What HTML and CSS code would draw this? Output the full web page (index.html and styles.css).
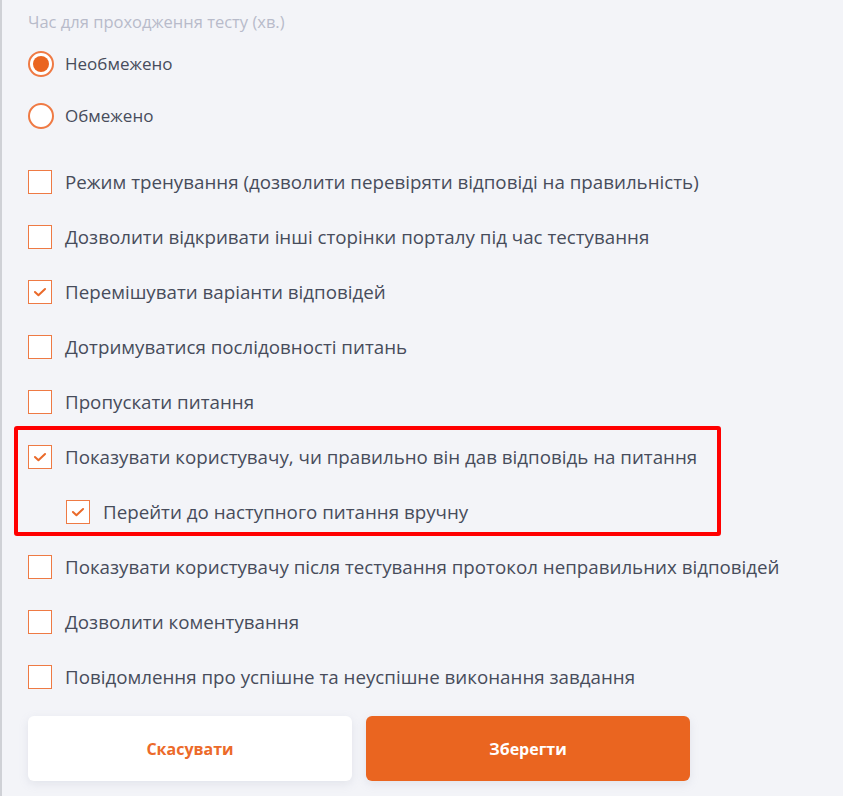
FILE: index.html
```html
<!DOCTYPE html>
<html lang="uk">
<head>
<meta charset="utf-8">
<title>Налаштування тесту</title>
<link rel="stylesheet" href="styles.css">
</head>
<body>
<div class="page">
  <div class="field-label">Час для проходження тесту (хв.)</div>
  <div class="radio-row"><span class="radio checked"></span><span class="text">Необмежено</span></div>
  <div class="radio-row"><span class="radio"></span><span class="text">Обмежено</span></div>

  <div class="checks">
    <div class="row"><span class="box"></span><span class="text">Режим тренування (дозволити перевіряти відповіді на правильність)</span></div>
    <div class="row"><span class="box"></span><span class="text">Дозволити відкривати інші сторінки порталу під час тестування</span></div>
    <div class="row"><span class="box checked"><svg viewBox="0 0 24 24" width="24" height="24"><path d="M6.5 12l3.8 3.6 7.2-6.8" fill="none" stroke="#ea6a2a" stroke-width="2.2" stroke-linecap="round" stroke-linejoin="round"/></svg></span><span class="text">Перемішувати варіанти відповідей</span></div>
    <div class="row"><span class="box"></span><span class="text">Дотримуватися послідовності питань</span></div>
    <div class="row"><span class="box"></span><span class="text">Пропускати питання</span></div>
    <div class="highlight">
      <div class="row"><span class="box checked"><svg viewBox="0 0 24 24" width="24" height="24"><path d="M6.5 12l3.8 3.6 7.2-6.8" fill="none" stroke="#ea6a2a" stroke-width="2.2" stroke-linecap="round" stroke-linejoin="round"/></svg></span><span class="text">Показувати користувачу, чи правильно він дав відповідь на питання</span></div>
      <div class="row nested"><span class="box checked"><svg viewBox="0 0 24 24" width="24" height="24"><path d="M6.5 12l3.8 3.6 7.2-6.8" fill="none" stroke="#ea6a2a" stroke-width="2.2" stroke-linecap="round" stroke-linejoin="round"/></svg></span><span class="text">Перейти до наступного питання вручну</span></div>
    </div>
    <div class="row"><span class="box"></span><span class="text">Показувати користувачу після тестування протокол неправильних відповідей</span></div>
    <div class="row"><span class="box"></span><span class="text">Дозволити коментування</span></div>
    <div class="row"><span class="box"></span><span class="text">Повідомлення про успішне та неуспішне виконання завдання</span></div>
  </div>

  <div class="actions">
    <button class="btn cancel">Скасувати</button>
    <button class="btn save">Зберегти</button>
  </div>
</div>
</body>
</html>
```
FILE: styles.css
```css
html, body {
  margin: 0;
  padding: 0;
  background: #f3f4f8;
  height: 100%;
}
body {
  font-family: "Open Sans", "Noto Sans", sans-serif;
  color: #474c5b;
  overflow: hidden;
}
.page {
  border-left: 2px solid #cfd1d6;
  min-height: 796px;
  box-sizing: border-box;
  padding: 10px 0 0 26px;
  display: flex;
  flex-direction: column;
}
.field-label {
  font-size: 16.5px;
  line-height: 24px;
  color: #b8bbca;
  height: 28px;
}
.radio-row {
  height: 52px;
  display: flex;
  align-items: center;
  gap: 11px;
}
.radio {
  width: 26px;
  height: 26px;
  border: 2px solid #ef7a44;
  border-radius: 50%;
  background: #fff;
  box-sizing: border-box;
  display: flex;
  align-items: center;
  justify-content: center;
}
.radio.checked::after {
  content: "";
  width: 16px;
  height: 16px;
  border-radius: 50%;
  background: #ea6520;
}
.text {
  font-size: 17px;
  line-height: 24px;
  white-space: nowrap;
}
.checks {
  margin-top: 12px;
  display: flex;
  flex-direction: column;
}
.checks .text {
  font-size: 18.75px;
}
.row {
  height: 55px;
  display: flex;
  align-items: center;
  gap: 13px;
}
.row.nested {
  padding-left: 38px;
}
.box {
  width: 24px;
  height: 24px;
  border: 1.5px solid #ee7a44;
  background: #fff;
  box-sizing: border-box;
  display: flex;
  align-items: center;
  justify-content: center;
  flex: none;
}
.box svg {
  width: 22px;
  height: 22px;
}
.highlight {
  position: relative;
}
.highlight::after {
  content: "";
  position: absolute;
  left: -14px;
  top: -3px;
  width: 707px;
  height: 110px;
  border: 4px solid #ff0000;
  border-radius: 3px;
  box-sizing: border-box;
  pointer-events: none;
}
.actions {
  margin-top: 12px;
  display: flex;
  gap: 14px;
}
.btn {
  width: 324px;
  height: 65px;
  border: none;
  border-radius: 6px;
  font-family: "Open Sans", "Noto Sans", sans-serif;
  font-weight: 700;
  font-size: 16px;
  box-shadow: 0 3px 10px rgba(150, 155, 175, 0.18);
  cursor: pointer;
}
.btn.cancel {
  background: #fff;
  color: #ec6a2a;
}
.btn.save {
  background: #ea6520;
  color: #fff;
}
```
